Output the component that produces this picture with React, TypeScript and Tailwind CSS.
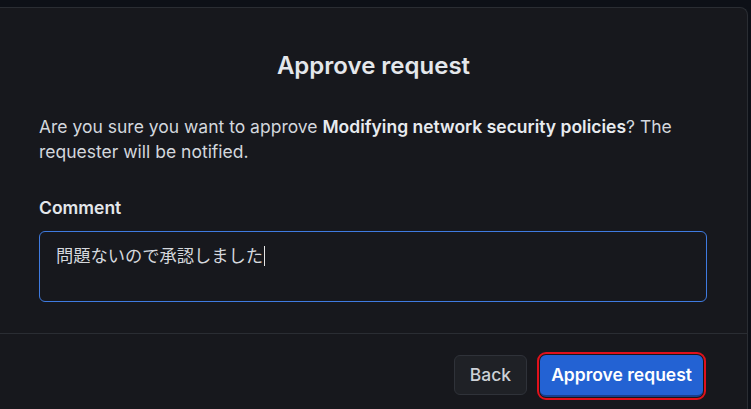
export default function App() {
  return (
    <div className="min-h-[409px] bg-[#0d1017] pt-[7px] pr-[3px] font-['Inter','Noto_Sans_CJK_JP',sans-serif]">
      <div className="h-[402px] overflow-hidden rounded-tr-[8px] border-t border-r border-[#2a2d33] bg-[#17181d]">
        {/* ヘッダー */}
        <h2 className="pt-[42px] text-center text-[24px] leading-[32px] font-semibold text-[#e4e7eb]">
          Approve request
        </h2>

        {/* 本文 */}
        <div className="px-[39px] pr-[40px] pt-[32px] pb-[31px]">
          <p className="text-[17.5px] leading-[25px] text-[#d3d7dd]">
            Are you sure you want to approve{" "}
            <strong className="font-semibold text-[#e8ebef]">Modifying network security policies</strong>? The
            requester will be notified.
          </p>

          <label className="mt-[32px] block text-[17.5px] leading-[24px] font-semibold text-[#e4e7eb]">
            Comment
          </label>
          <div className="mt-[11px] h-[71px] rounded-[6px] border border-[#3f7be0] px-4 pt-[10px]">
            <span className="text-[17.25px] leading-[24px] text-[#d5d8dd] font-['Noto_Sans_CJK_JP',sans-serif]">
              問題ないので承認しました
            </span>
            <span className="ml-[1px] inline-block h-[20px] w-px translate-y-[4px] bg-[#e6e6e6]" />
          </div>
        </div>

        {/* フッター */}
        <div className="flex justify-end gap-[13px] border-t border-[#2a2d33] pt-[21px] pr-[44px]">
          <button className="h-[40px] rounded-[6px] border border-[#2f3239] bg-[#1f2126] px-[15px] text-[17.5px] font-medium text-[#cdd1d7]">
            Back
          </button>
          <button className="h-[42px] rounded-[6px] border-b-2 border-[#1a3f8c] bg-[#2362d3] px-[11px] text-[17.5px] font-semibold text-white outline-2 outline-offset-1 outline-[#e0111b]">
            Approve request
          </button>
        </div>
      </div>
    </div>
  );
}
